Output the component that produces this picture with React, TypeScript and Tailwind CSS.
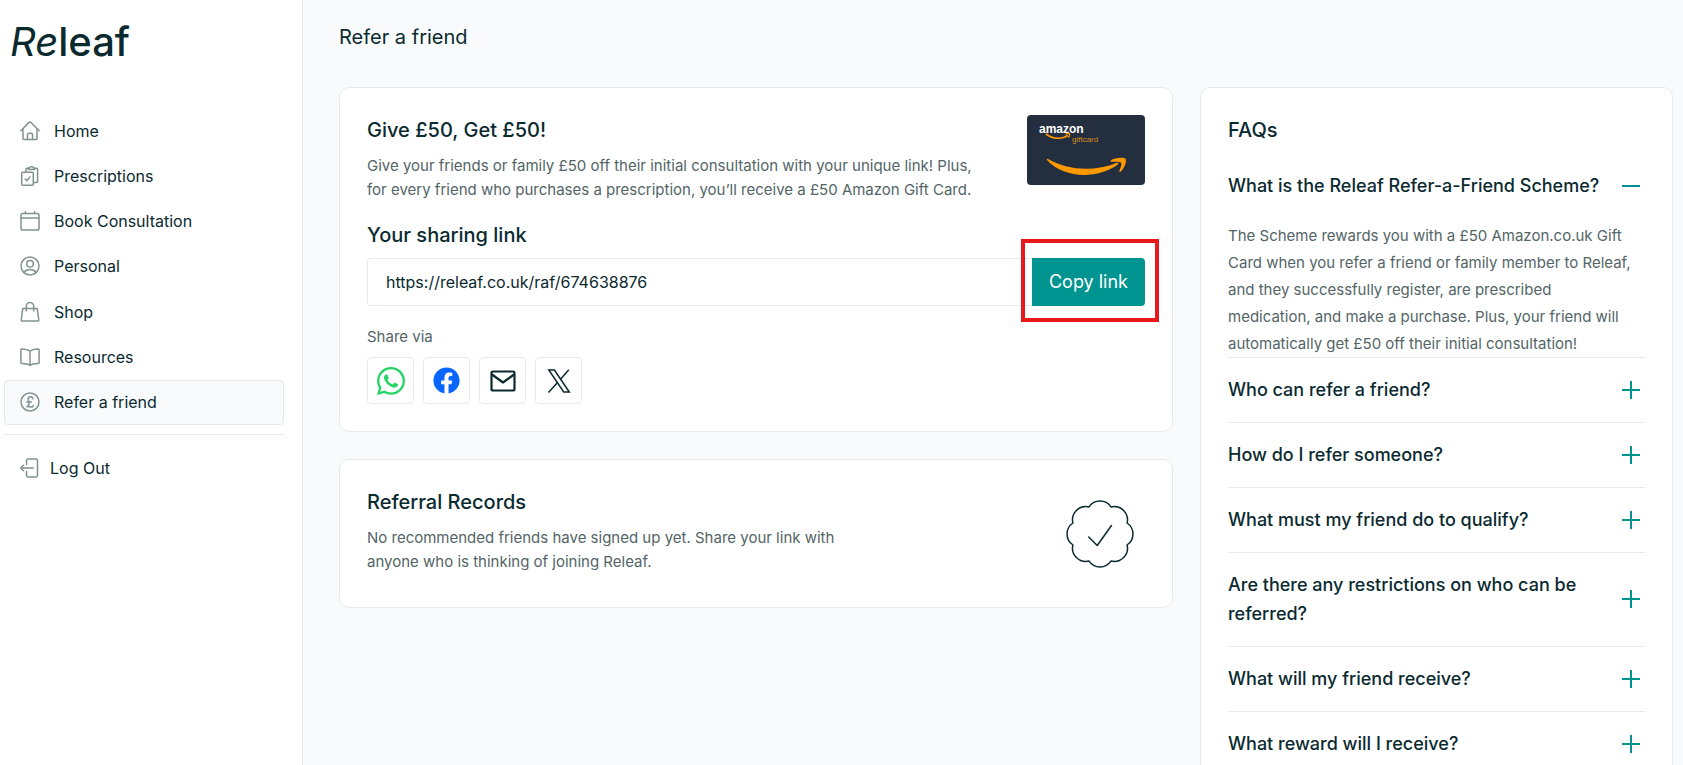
import { useState, type ReactNode } from 'react';
import { FaFacebook, FaWhatsapp } from 'react-icons/fa';

const iconProps = {
  viewBox: '0 0 20 20',
  fill: 'none',
  stroke: 'currentColor',
  strokeWidth: 1.5,
  strokeLinecap: 'round' as const,
  strokeLinejoin: 'round' as const,
  className: 'h-5 w-5 shrink-0 text-[#82938f]',
  'aria-hidden': true,
};

const HomeIcon = () => (
  <svg {...iconProps}>
    <path d="M.8 9.700 9 1.400a1.400 1.400 0 0 1 2 0l8.200 8.300" />
    <path d="M3 8v9.400c0 .7.500 1.200 1.200 1.200h11.600c.7 0 1.200-.5 1.200-1.200V8" />
    <path d="M7.500 18.600v-4.700c0-1.200.7-1.700 1.500-1.700h2c.8 0 1.500.500 1.500 1.700v4.700" />
  </svg>
);

const PrescriptionsIcon = () => (
  <svg {...iconProps}>
    <rect x="1.700" y="6.200" width="11.600" height="13" rx="1" />
    <path d="M6 6V3.300c0-.7.400-1.100 1.100-1.100h1.400m6 0h2c.7 0 1.100.4 1.100 1.100v12.200c0 .7-.4 1.100-1.100 1.100h-3" />
    <path d="M8.500 3.400V1.900l1.300-.2c.4-.9.900-1.100 1.700-1.100s1.400.2 1.700 1.100l1.300.2v1.500z" />
    <path d="m5.200 13 1.700 1.800 3-3.900" />
  </svg>
);

const CalendarIcon = () => (
  <svg {...iconProps}>
    <rect x="1" y="2.600" width="18" height="16.400" rx="1.800" />
    <path d="M1 7h18M5.400.800v1.800M14.600.800v1.800" />
  </svg>
);

const PersonalIcon = () => (
  <svg {...iconProps}>
    <circle cx="10" cy="10" r="9" />
    <circle cx="10" cy="7.700" r="3.300" />
    <path d="M4 16.400c1.500-2.200 3.500-3 6-3s4.500.8 6 3" />
  </svg>
);

const ShopIcon = () => (
  <svg {...iconProps}>
    <path d="M2.800 6.400h14.400l1.600 11.800c.1.500-.2.900-.7.900H1.900c-.5 0-.8-.4-.7-.9z" />
    <path d="M6.300 9V4.200a3.700 3.700 0 0 1 7.400 0V9" />
  </svg>
);

const ResourcesIcon = () => (
  <svg {...iconProps}>
    <path d="M10 4.300C8.500 2.800 5 2 1.600 2c-.4 0-.7.300-.7.700v13c0 .4.300.7.700.7 3.400 0 6.900.500 8.400 2 1.500-1.500 5-2 8.400-2 .4 0 .7-.3.7-.7v-13c0-.4-.3-.7-.7-.7-3.400 0-6.900.8-8.400 2.300zM10 4.300v14" />
  </svg>
);

const PoundIcon = () => (
  <svg {...iconProps}>
    <circle cx="10" cy="10" r="9" />
    <path d="M12.900 6.700c-.3-1.300-1.300-1.900-2.400-1.900-1.600 0-2.700 1.300-2.300 3 .4 1.600 1.200 2.600.8 4.400-.2 1.100-.9 1.900-2 2.500 1.700-.6 3 .3 4.200.3 1 0 1.700-.4 2.100-1.400M6.800 9.900h4.600" />
  </svg>
);

const LogOutIcon = () => (
  <svg {...iconProps}>
    <path d="M6.500 6.500V2.700c0-1 .7-1.700 1.700-1.700h7.600c1 0 1.700.7 1.700 1.700v14.600c0 1-.7 1.700-1.700 1.700H8.200c-1 0-1.700-.7-1.700-1.700v-3.800" />
    <path d="M13.300 10H.8M3.500 7.200.7 10l2.800 2.800" />
  </svg>
);

const MailIcon = () => (
  <svg viewBox="0 0 28 28" fill="none" stroke="#0a2a30" strokeWidth="2.200" strokeLinejoin="round" className="h-7 w-7" aria-hidden="true">
    <rect x="2.500" y="4.500" width="23" height="19" rx="1.500" />
    <path d="m3 7.500 11 8 11-8" />
  </svg>
);

const XIcon = () => (
  <svg viewBox="0 0 24 24" fill="none" stroke="#0a2a30" strokeWidth="1.500" className="h-6 w-6" aria-hidden="true">
    <path d="M1.800 1h5.600l14.900 22h-5.600z" />
    <path d="M21.800.700 13.300 10.400M10.500 13.500 1.500 23.500" />
  </svg>
);

const SealIcon = () => (
  <svg viewBox="0 0 68 68" fill="none" stroke="#0a2a30" strokeWidth="1.500" strokeLinecap="round" strokeLinejoin="round" className="h-[68px] w-[68px]" aria-hidden="true">
    <path d="M23 6.900a13.300 13.300 0 0 1 22 0A13.300 13.300 0 0 1 61.100 23a13.300 13.300 0 0 1 0 22A13.300 13.300 0 0 1 45 61.100a13.300 13.300 0 0 1-22 0A13.300 13.300 0 0 1 6.900 45a13.300 13.300 0 0 1 0-22A13.300 13.300 0 0 1 23 6.900z" />
    <path d="m22.700 37 8.500 8.500L45.500 25.500" />
  </svg>
);

function GiftCard() {
  return (
    <svg viewBox="0 0 118 70" className="h-[70px] w-[118px] shrink-0" role="img" aria-label="Amazon gift card">
      <rect width="118" height="70" rx="4" fill="#232f3e" />
      <text x="12" y="18" fill="#fff" fontSize="12" fontWeight="700" fontFamily="'Liberation Sans', sans-serif">
        amazon
      </text>
      <path d="M19 19c7 5.500 16 5.500 22 1.500" stroke="#ff9900" strokeWidth="1.600" fill="none" />
      <path d="M38.500 19.200c2-1 3.600-1 4.200-.5.200 1.300-.4 2.900-1.400 4" stroke="#ff9900" strokeWidth="1.200" fill="none" />
      <text x="45" y="27" fill="#d98a1c" fontSize="8" fontFamily="'Liberation Sans', sans-serif">
        giftcard
      </text>
      <path d="M20.500 43.800c20 11.500 46 13.500 69.500 4 1.200-.5 2 .9.900 1.700C70.500 64.500 37 63.500 20.200 45.300c-.7-.9-.4-2 .3-1.500z" fill="#ff9900" />
      <path d="M84 45.200c3-2.400 12-3.400 14.400-1.600 1.800 2.700-1 10.200-4.900 13.200-.7.500-1.500.1-1.200-.7 1.200-2.900 2.700-7.200 1.900-8.400-1-1.200-6.300-1-9.700-1-.9 0-1.200-.9-.5-1.500z" fill="#ff9900" />
    </svg>
  );
}

const navItems = [
  { label: 'Home', icon: HomeIcon },
  { label: 'Prescriptions', icon: PrescriptionsIcon },
  { label: 'Book Consultation', icon: CalendarIcon },
  { label: 'Personal', icon: PersonalIcon },
  { label: 'Shop', icon: ShopIcon },
  { label: 'Resources', icon: ResourcesIcon },
  { label: 'Refer a friend', icon: PoundIcon, active: true },
];

function Sidebar() {
  return (
    <aside className="w-[303px] shrink-0 border-r border-[#e6eaea] bg-white pl-1 pr-[18px]">
      <a href="#" className="ml-[6px] mt-4 block text-[40px] leading-[52px] text-[#0a2a30]">
        <span className="italic">Re</span>
        <span className="font-medium">leaf</span>
      </a>
      <nav className="mt-10">
        <ul className="flex h-[327px] flex-col justify-between border-b border-[#e6eaea] pb-[9px]">
          {navItems.map(({ label, icon: Icon, active }) => (
            <li key={label}>
              <a
                href="#"
                className={`flex h-[45px] items-center gap-[14px] rounded-[4px] border px-[15px] text-base ${
                  active ? 'border-[#e3e8e9] bg-[#f9fafc]' : 'border-transparent'
                }`}
              >
                <Icon />
                {label}
              </a>
            </li>
          ))}
        </ul>
        <button type="button" className="mt-[10px] flex h-[45px] w-full items-center gap-[10px] px-4 text-base">
          <LogOutIcon />
          Log Out
        </button>
      </nav>
    </aside>
  );
}

function Card({ className = '', children }: { className?: string; children: ReactNode }) {
  return <section className={`rounded-[10px] border border-[#e6eaea] bg-white px-[27px] ${className}`}>{children}</section>;
}

const shareOptions = [
  { label: 'Share on WhatsApp', icon: <FaWhatsapp className="h-8 w-8 text-[#25d366]" /> },
  { label: 'Share on Facebook', icon: <FaFacebook className="h-[27px] w-[27px] text-[#0866ff]" /> },
  { label: 'Share by email', icon: <MailIcon /> },
  { label: 'Share on X', icon: <XIcon /> },
];

function ReferCard() {
  const link = 'https://releaf.co.uk/raf/674638876';

  return (
    <Card className="py-[27px]">
      <div className="flex items-start justify-between gap-6">
        <div>
          <h2 className="text-xl font-medium leading-[30px]">Give £50, Get £50!</h2>
          <p className="mt-[9px] max-w-[620px] text-[15px] leading-6 text-[#536567]">
            Give your friends or family £50 off their initial consultation with your unique link! Plus, for every friend
            who purchases a prescription, you’ll receive a £50 Amazon Gift Card.
          </p>
        </div>
        <GiftCard />
      </div>

      <label htmlFor="sharing-link" className="mt-[18px] block text-xl font-medium leading-[30px]">
        Your sharing link
      </label>
      <div className="mt-2 flex h-12">
        <input
          id="sharing-link"
          type="text"
          readOnly
          value={link}
          className="min-w-0 flex-1 rounded-l-[4px] border border-r-0 border-[#e6eaea] px-[18px] text-base outline-none"
        />
        <div className="relative">
          <button
            type="button"
            onClick={() => navigator.clipboard?.writeText(link)}
            className="h-full rounded-r-[4px] bg-[#009490] px-[17px] text-lg text-white"
          >
            Copy link
          </button>
          <div className="pointer-events-none absolute -bottom-4 -left-[11px] -right-3.5 -top-[19px] border-4 border-[#e8191c]" />
        </div>
      </div>

      <p className="mt-[19px] text-[15px] leading-6 text-[#536567]">Share via</p>
      <div className="mt-2 flex gap-[9px]">
        {shareOptions.map(({ label, icon }) => (
          <button
            key={label}
            type="button"
            aria-label={label}
            className="flex h-[47px] w-[47px] items-center justify-center rounded-[4px] border border-[#e6eaea]"
          >
            {icon}
          </button>
        ))}
      </div>
    </Card>
  );
}

function RecordsCard() {
  return (
    <Card className="flex items-center justify-between py-[27px]">
      <div>
        <h2 className="text-xl font-medium leading-[30px]">Referral Records</h2>
        <p className="mt-[9px] max-w-[490px] pb-[6px] text-[15px] leading-6 text-[#536567]">
          No recommended friends have signed up yet. Share your link with anyone who is thinking of joining Releaf.
        </p>
      </div>
      <div className="mr-[11px]">
        <SealIcon />
      </div>
    </Card>
  );
}

const faqs = [
  {
    question: 'What is the Releaf Refer-a-Friend Scheme?',
    answer:
      'The Scheme rewards you with a £50 Amazon.co.uk Gift Card when you refer a friend or family member to Releaf, and they successfully register, are prescribed medication, and make a purchase. Plus, your friend will automatically get £50 off their initial consultation!',
  },
  { question: 'Who can refer a friend?' },
  { question: 'How do I refer someone?' },
  { question: 'What must my friend do to qualify?' },
  { question: 'Are there any restrictions on who can be referred?' },
  { question: 'What will my friend receive?' },
  { question: 'What reward will I receive?' },
];

function FaqCard() {
  const [open, setOpen] = useState(0);

  return (
    <Card className="pt-[27px]">
      <h2 className="text-xl font-medium leading-[30px]">FAQs</h2>
      <div className="mt-[9px]">
        {faqs.map(({ question, answer }, i) => (
          <div key={question} className="border-b border-[#e6eaea]">
            <button
              type="button"
              aria-expanded={open === i}
              onClick={() => setOpen(open === i ? -1 : i)}
              className="flex w-full items-center justify-between gap-4 pb-[18px] pr-1 pt-[17px] text-left text-lg font-medium leading-[29px]"
            >
              {question}
              <svg viewBox="0 0 20 20" stroke="#009490" strokeWidth="2" className="h-5 w-5 shrink-0" aria-hidden="true">
                <path d={open === i ? 'M1 10h18' : 'M1 10h18M10 1v18'} />
              </svg>
            </button>
            {open === i && answer && (
              <p className="max-w-[406px] pt-1 text-[15px] leading-[27px] text-[#536567]">{answer}</p>
            )}
          </div>
        ))}
      </div>
    </Card>
  );
}

export default function App() {
  return (
    <div className="flex h-screen overflow-hidden bg-[#f9fafc] font-['Inter','Liberation_Sans',sans-serif] text-[#0a2a30]">
      <Sidebar />
      <main className="min-w-0 flex-1 pl-9 pr-[10px] pt-[21px]">
        <h1 className="text-xl leading-8">Refer a friend</h1>
        <div className="mt-[34px] grid grid-cols-[minmax(0,1fr)_473px] items-start gap-[27px]">
          <div className="flex flex-col gap-[27px]">
            <ReferCard />
            <RecordsCard />
          </div>
          <FaqCard />
        </div>
      </main>
    </div>
  );
}
